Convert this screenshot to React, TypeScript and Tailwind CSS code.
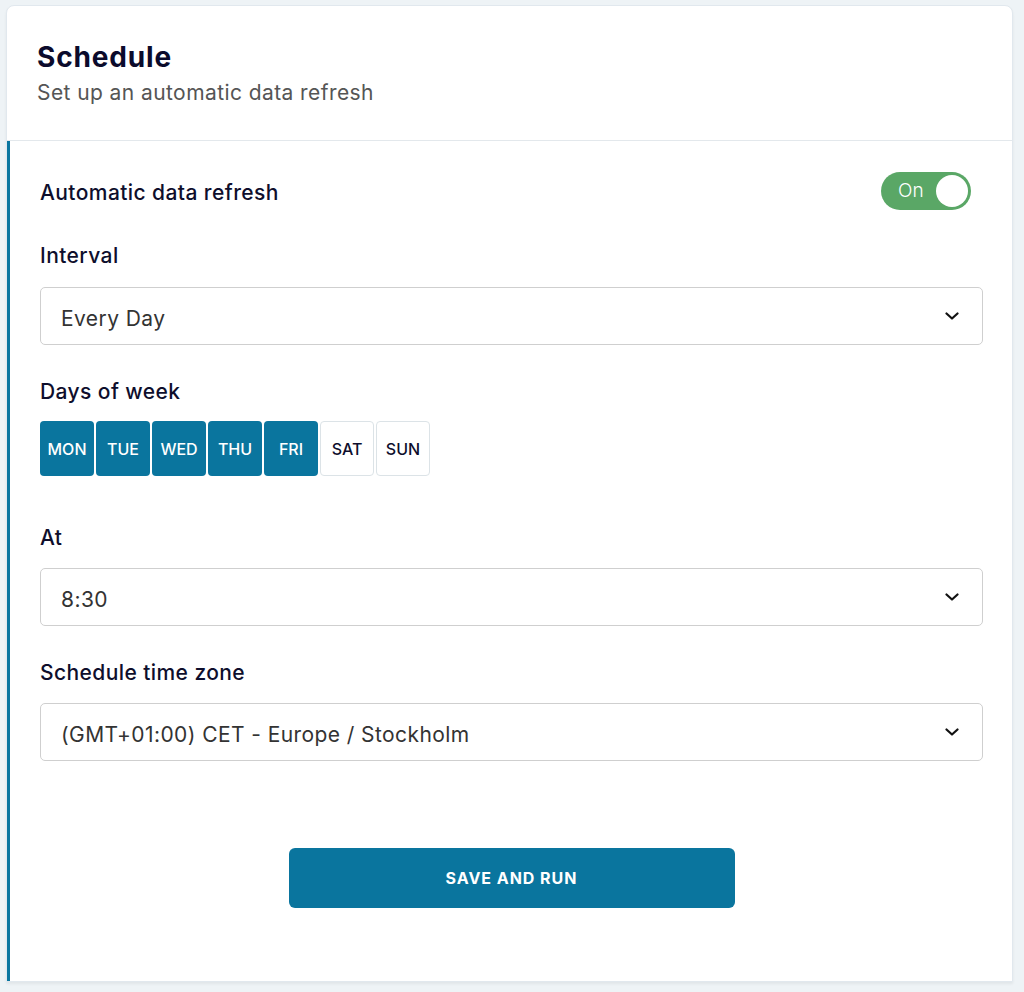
import React from "react";

const font = { fontFamily: '"Inter", "Roboto", "Liberation Sans", sans-serif' };

function Chevron() {
  return (
    <svg width="14" height="8" viewBox="0 0 14 8" fill="none" className="shrink-0">
      <path d="M1.5 1.5 L7 6.5 L12.5 1.5" stroke="#111" strokeWidth="2.2" strokeLinecap="round" strokeLinejoin="round" />
    </svg>
  );
}

function Select({ value }: { value: string }) {
  return (
    <div className="flex h-[58px] items-center justify-between rounded-[5px] border border-[#cfcfcf] bg-white pl-[20px] pr-[23px]">
      <span className="pt-[5px] text-[21px] leading-[28px] tracking-[0.02em] text-[#333333]">{value}</span>
      <Chevron />
    </div>
  );
}

function Label({ children }: { children: React.ReactNode }) {
  return (
    <div className="h-[28px] pt-[2px] text-[21px] font-medium leading-[28px] tracking-[0.02em] text-[#0e0e2c]">
      {children}
    </div>
  );
}

const days = [
  { d: "MON", on: true },
  { d: "TUE", on: true },
  { d: "WED", on: true },
  { d: "THU", on: true },
  { d: "FRI", on: true },
  { d: "SAT", on: false },
  { d: "SUN", on: false },
];

export default function App() {
  return (
    <div className="min-h-[992px] bg-[#eef3f6] pl-[6px] pr-[11px] pt-[5px] pb-[10px]" style={font}>
      <div className="rounded-t-[8px] border border-[#e1e8ee] bg-white shadow-[0_2px_3px_rgba(0,0,0,0.06)]">
        <div className="h-[135px] border-b border-[#e3e8ec] pl-[30px] pt-[34px]">
          <div className="text-[28px] font-bold leading-[34px] tracking-[0.03em] text-[#0b0b2c]">Schedule</div>
          <div className="mt-[5px] text-[21px] leading-[28px] tracking-[0.02em] text-[#555555]">
            Set up an automatic data refresh
          </div>
        </div>
        <div className="border-l-[3px] border-[#0a76a0] pl-[30px] pr-[29px] pt-[31px] pb-[73px]">
          <div className="flex h-[38px] items-center justify-between">
            <span className="pt-[3px] text-[21px] font-medium tracking-[0.02em] text-[#0e0e2c]">Automatic data refresh</span>
            <div className="mr-[12px] flex h-[38px] w-[90px] items-center justify-between rounded-full bg-[#5aa766] pl-[17px] pr-[3px]">
              <span className="text-[19px] font-light text-white">On</span>
              <span className="h-[32px] w-[32px] rounded-full bg-white" />
            </div>
          </div>

          <div className="mt-[30px]">
            <Label>Interval</Label>
          </div>
          <div className="mt-[19px]">
            <Select value="Every Day" />
          </div>

          <div className="mt-[31px]">
            <Label>Days of week</Label>
          </div>
          <div className="mt-[17px] flex gap-[2px]">
            {days.map((x) =>
              x.on ? (
                <div
                  key={x.d}
                  className="flex h-[55px] w-[54px] items-center justify-center rounded-[4px] bg-[#0a759e] text-[16px] font-medium text-white"
                >
                  {x.d}
                </div>
              ) : (
                <div
                  key={x.d}
                  className="flex h-[55px] w-[54px] items-center justify-center rounded-[4px] border border-[#dce3e7] bg-white text-[16px] font-medium text-[#0e0e2c]"
                >
                  {x.d}
                </div>
              )
            )}
          </div>

          <div className="mt-[46px]">
            <Label>At</Label>
          </div>
          <div className="mt-[18px]">
            <Select value="8:30" />
          </div>

          <div className="mt-[31px]">
            <Label>Schedule time zone</Label>
          </div>
          <div className="mt-[18px]">
            <Select value="(GMT+01:00) CET - Europe / Stockholm" />
          </div>

          <div className="mt-[87px] flex justify-center">
            <button className="h-[60px] w-[446px] rounded-[6px] bg-[#0a759e] text-[16px] font-bold tracking-[0.06em] text-white">
              SAVE AND RUN
            </button>
          </div>
        </div>
      </div>
    </div>
  );
}
